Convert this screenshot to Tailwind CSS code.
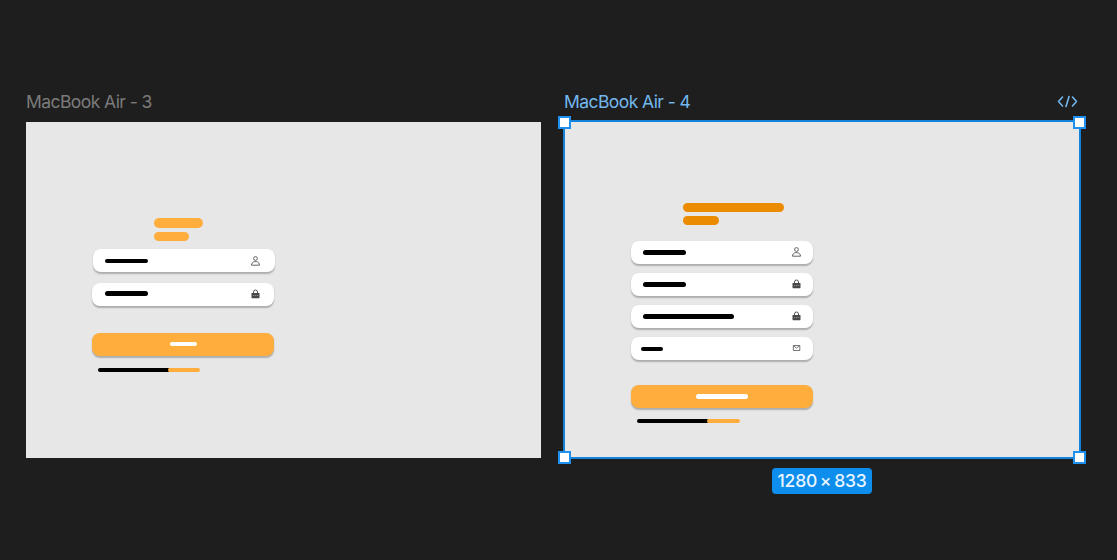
<!DOCTYPE html>
<html lang="en">
<head>
<meta charset="utf-8">
<title>Canvas</title>
<script src="https://cdn.jsdelivr.net/npm/@tailwindcss/browser@4"></script>
</head>
<body class="relative h-[560px] w-[1117px] overflow-hidden bg-[#1e1e1e] font-['Inter',sans-serif]">
<svg class="hidden">
  <symbol id="user" viewBox="0 0 9 10"><g fill="none" stroke="#555" stroke-width=".9"><circle cx="4.500" cy="2.500" r="1.900"/><path d="M.5 9.200c0-1.900 1.300-3.200 2.800-3.500h2.400C7.200 6 8.500 7.300 8.500 9.200Z"/></g></symbol>
  <symbol id="lock" viewBox="0 0 9 10"><path d="M2.500 4.500V3a2 2 0 0 1 4 0v1.500" fill="none" stroke="#555"/><rect x=".5" y="3.900" width="8" height="5.300" rx=".6" fill="#484848"/><path d="M2.200 6.500h5" stroke="#999" stroke-width=".9" stroke-dasharray="1.200 .7"/></symbol>
  <symbol id="mail" viewBox="0 0 9 10"><path d="M1.300 2.500h6.500v5h-6.500zM1.500 2.700l3 2.400 3-2.400" fill="none" stroke="#666" stroke-width=".9"/></symbol>
</svg>

<!-- Frame: sign in -->
<section class="absolute left-[25.5px] top-[92px] w-[515px]">
  <h2 class="h-[30px] whitespace-nowrap pl-[.5px] text-[17.500px] leading-[20px] tracking-[-.57px] text-[#7b7b7b]">MacBook Air - 3</h2>
  <div class="h-[335.500px] bg-[#e7e7e7] pl-[66.900px] pt-[96.400px]">
    <div class="ml-[61.500px] flex flex-col gap-[4px]">
      <div class="h-[9.200px] w-[49.500px] rounded-full bg-[#ffae3d]"></div>
      <div class="h-[9.200px] w-[35px] rounded-full bg-[#ffae3d]"></div>
    </div>
    <div class="mt-[8.700px] flex w-[182px] flex-col gap-[10.200px]">
      <div class="ml-[.5px] flex h-[23px] w-[182px] items-center justify-between rounded-[8px] bg-white pl-[12px] pr-[15.300px] shadow-[0_1.500px_1.500px_rgba(0,0,0,0.25)]">
        <div class="h-[4.400px] w-[43.500px] rounded-full bg-black"></div>
        <svg class="h-[10px] w-[9px]"><use href="#user"/></svg>
      </div>
      <div class="flex h-[23px] items-center justify-between rounded-[8px] bg-white pl-[12.500px] pr-[14.800px] shadow-[0_1.500px_1.500px_rgba(0,0,0,0.25)]">
        <div class="mb-[1.500px] h-[4.400px] w-[43.500px] rounded-full bg-black"></div>
        <svg class="h-[10px] w-[9px]"><use href="#lock"/></svg>
      </div>
    </div>
    <div class="mt-[27px] flex h-[23px] w-[182px] items-center justify-center rounded-[8px] bg-[#ffae3d] shadow-[0_1.500px_1.500px_rgba(0,0,0,0.25)]">
      <div class="h-[4.500px] w-[27px] rounded-full bg-white"></div>
    </div>
    <div class="ml-[6px] mt-[12px] flex">
      <div class="h-[4.300px] w-[72px] rounded-full bg-black"></div>
      <div class="-ml-[2px] h-[4.300px] w-[32px] rounded-full bg-[#ffae3d]"></div>
    </div>
  </div>
</section>

<!-- Frame: sign up, selected -->
<section class="absolute left-[564px] top-[91px] w-[516px]">
  <div class="flex h-[30px] justify-between pr-[2px] pt-px">
    <h2 class="whitespace-nowrap text-[17.500px] leading-[20px] tracking-[-.57px] text-[#72b8ee]">MacBook Air - 4</h2>
    <svg class="mt-[3px] h-[13px] w-[21px]" viewBox="0 0 21 13" fill="none" stroke="#72b8ee" stroke-width="1.600" stroke-linecap="round" stroke-linejoin="round"><path d="M5.500 2 1.500 6.500l4 4.500M15.500 2l4 4.500-4 4.500M12 1.500 9 11.500"/></svg>
  </div>
  <div class="h-[337px] bg-[#e7e7e7] pl-[67px] pt-[81.500px] outline-2 -outline-offset-1 outline-[#1482d8]">
    <div class="ml-[51.700px] flex flex-col gap-[4px]">
      <div class="h-[9.200px] w-[101px] rounded-full bg-[#eb8c00]"></div>
      <div class="h-[9.200px] w-[36.700px] rounded-full bg-[#eb8c00]"></div>
    </div>
    <div class="mt-[16.100px] flex w-[182.300px] flex-col gap-[9.100px]">
      <div class="flex h-[23px] items-center justify-between rounded-[8px] bg-white pl-[11.800px] pr-[12.300px] shadow-[0_1.500px_1.500px_rgba(0,0,0,0.25)]">
        <div class="h-[4.400px] w-[43.500px] rounded-full bg-black"></div>
        <svg class="h-[10px] w-[9px]"><use href="#user"/></svg>
      </div>
      <div class="flex h-[23px] items-center justify-between rounded-[8px] bg-white pl-[11.800px] pr-[12.300px] shadow-[0_1.500px_1.500px_rgba(0,0,0,0.25)]">
        <div class="h-[4.400px] w-[43.500px] rounded-full bg-black"></div>
        <svg class="mb-[1px] h-[10px] w-[9px]"><use href="#lock"/></svg>
      </div>
      <div class="flex h-[23px] items-center justify-between rounded-[8px] bg-white pl-[11.800px] pr-[12.300px] shadow-[0_1.500px_1.500px_rgba(0,0,0,0.25)]">
        <div class="h-[4.400px] w-[91.500px] rounded-full bg-black"></div>
        <svg class="mb-[1px] h-[10px] w-[9px]"><use href="#lock"/></svg>
      </div>
      <div class="flex h-[23px] items-center justify-between rounded-[8px] bg-white pl-[10px] pr-[12.300px] shadow-[0_1.500px_1.500px_rgba(0,0,0,0.25)]">
        <div class="h-[4.400px] w-[22px] rounded-full bg-black"></div>
        <svg class="mb-[1px] h-[10px] w-[9px]"><use href="#mail"/></svg>
      </div>
    </div>
    <div class="mt-[24.700px] flex h-[23px] w-[182.300px] items-center justify-center rounded-[8px] bg-[#ffae3d] shadow-[0_1.500px_1.500px_rgba(0,0,0,0.25)]">
      <div class="h-[4.500px] w-[51.500px] rounded-full bg-white"></div>
    </div>
    <div class="ml-[6px] mt-[11px] flex">
      <div class="h-[4.300px] w-[72px] rounded-full bg-black"></div>
      <div class="-ml-[2px] h-[4.300px] w-[32.500px] rounded-full bg-[#ffae3d]"></div>
    </div>
  </div>
</section>

<!-- Selection handles and size badge -->
<i class="absolute left-[558px] top-[116px] size-[13px] border-2 border-[#1e90ef] bg-white"></i>
<i class="absolute left-[1073px] top-[116px] size-[13px] border-2 border-[#1e90ef] bg-white"></i>
<i class="absolute left-[558px] top-[451px] size-[13px] border-2 border-[#1e90ef] bg-white"></i>
<i class="absolute left-[1073px] top-[451px] size-[13px] border-2 border-[#1e90ef] bg-white"></i>
<div class="absolute left-[772px] top-[468px] flex h-[26px] w-[100px] items-center justify-center whitespace-nowrap rounded-[4px] bg-[#0d8eec] pt-px text-[17.500px] font-medium tracking-[-.25px] [word-spacing:-1.500px] text-[#e9f5ff]">1280 × 833</div>
</body>
</html>
